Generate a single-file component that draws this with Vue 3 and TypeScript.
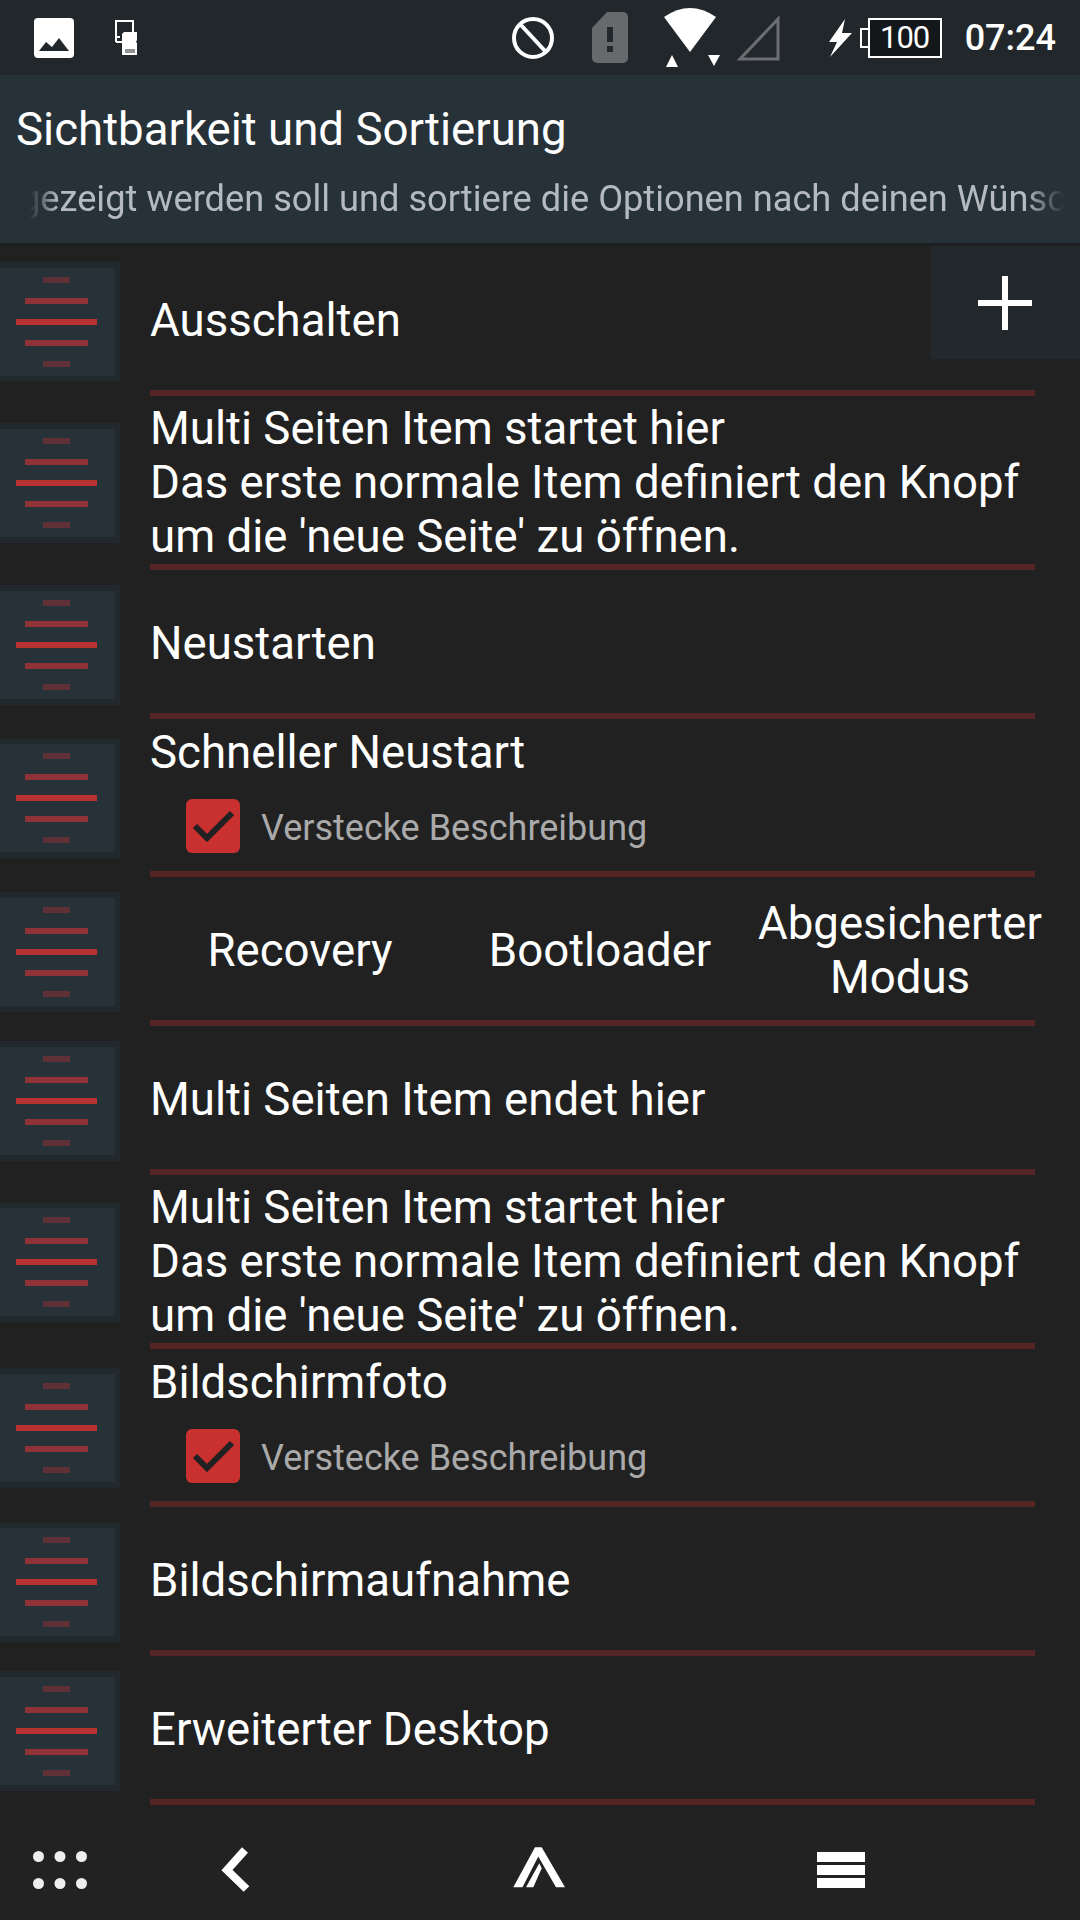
<template>
  <div class="screen">
    <div class="statusbar">
      <div class="statusbar__left">
        <svg width="40" height="40" viewBox="0 0 40 40">
          <rect x="0" y="0" width="40" height="40" rx="4" fill="#fff" />
          <path d="M5 33 L12 24 L18 29 L25 20 L35 33 Z" fill="#22272b" />
        </svg>
        <svg width="24" height="36" viewBox="0 0 24 36">
          <path d="M1 22V1h17v11" fill="none" stroke="#fff" stroke-width="2" />
          <path d="M1 22h6M1 17h4" fill="none" stroke="#fff" stroke-width="2" />
          <path d="M7 14l2-2h13v8l-1 2 1 1v12H7z" fill="#fff" />
          <path d="M11 29v4M13 29v4M15 29v4M17 29v4M19 29v4" stroke="#22272b" stroke-width="1" />
        </svg>
      </div>
      <div class="statusbar__right">
        <svg class="ic-block" width="44" height="44" viewBox="0 0 44 44">
          <circle cx="22" cy="22" r="19" fill="none" stroke="#fff" stroke-width="4" />
          <path d="M9 8 L35 36" stroke="#fff" stroke-width="4" />
        </svg>
        <svg class="ic-sim" width="36" height="51" viewBox="0 0 36 51">
          <path d="M15 0H31a5 5 0 0 1 5 5V46a5 5 0 0 1-5 5H5a5 5 0 0 1-5-5V16Z" fill="#666a6d" />
          <rect x="15" y="15" width="6" height="15" fill="#22272b" />
          <rect x="15" y="34" width="6" height="6" fill="#22272b" />
        </svg>
        <svg class="ic-wifi" width="58" height="60" viewBox="0 0 58 60">
          <path d="M1 9 Q27 -9 53 9 L27 44 Z" fill="#fff" />
          <path d="M3 59 L9 47 L15 59 Z" fill="#fff" />
          <path d="M45 47 H57 L51 58 Z" fill="#fff" />
        </svg>
        <svg class="ic-signal" width="45" height="46" viewBox="0 0 45 46">
          <path d="M43 4 V44 H5 Z" fill="none" stroke="#6b6f72" stroke-width="3" />
        </svg>
        <svg class="ic-bolt" width="23" height="38" viewBox="0 0 23 38">
          <path d="M16 0 L0 23 H8 L1 38 L23 14 H13 Z" fill="#fff" />
        </svg>
        <div class="battery"><span class="battery__cap"></span><span class="battery__body">100</span></div>
        <span class="clock">07:24</span>
      </div>
    </div>

    <header class="appbar">
      <h1 class="appbar__title">Sichtbarkeit und Sortierung</h1>
      <div class="appbar__sub"><span>gezeigt werden soll und sortiere die Optionen nach deinen Wünschen</span></div>
    </header>

    <main class="list">
      <div v-for="row in rows" :key="row.id" class="row" :style="{ height: row.height + 'px' }">
        <div class="handle">
          <div class="handle__inner">
            <i class="bar bar--far"></i>
            <i class="bar bar--near"></i>
            <i class="bar bar--mid"></i>
            <i class="bar bar--near"></i>
            <i class="bar bar--far"></i>
          </div>
        </div>
        <div class="row__body">
          <div v-if="row.columns" class="cols">
            <div v-for="col in row.columns" :key="col" class="cols__item">{{ col }}</div>
          </div>
          <div v-else class="row__text" :class="{ 'row__text--top': row.hideable }">
            <div v-for="line in row.lines" :key="line">{{ line }}</div>
            <label v-if="row.hideable" class="check">
              <svg width="54" height="54" viewBox="0 0 54 54">
                <rect width="54" height="54" rx="6" fill="#c93030" />
                <path d="M9 27 L21 39 L46 14" fill="none" stroke="#212121" stroke-width="6" />
              </svg>
              <span>Verstecke Beschreibung</span>
            </label>
          </div>
          <div class="row__rule"></div>
        </div>
      </div>

      <button class="add" type="button" aria-label="Hinzufügen"><span></span></button>
    </main>

    <nav class="navbar">
      <div class="navbar__item navbar__item--dots">
        <svg width="54" height="38" viewBox="0 0 54 38">
          <g fill="#eee">
            <circle cx="5.5" cy="5.5" r="5.5" /><circle cx="27" cy="5.5" r="5.5" /><circle cx="48.5" cy="5.5" r="5.5" />
            <circle cx="5.5" cy="32.5" r="5.5" /><circle cx="27" cy="32.5" r="5.5" /><circle cx="48.5" cy="32.5" r="5.5" />
          </g>
        </svg>
      </div>
      <div class="navbar__item navbar__item--back">
        <svg width="30" height="48" viewBox="0 0 30 48">
          <path d="M25 4 L7 24 L26.5 43" fill="none" stroke="#fff" stroke-width="8" />
        </svg>
      </div>
      <div class="navbar__item navbar__item--home">
        <svg width="52" height="48" viewBox="0 0 52 48">
          <path d="M22 1.3 H28.7 L52 41.3 H43 L25.3 10.5 L9.5 41.3 H0.3 Z" fill="#fff" />
          <path d="M13 41.3 H20.3 L28.7 22.3 L26.3 17.3 Z" fill="#fff" />
        </svg>
      </div>
      <div class="navbar__item navbar__item--menu">
        <div class="burger"><i></i><i></i><i></i></div>
      </div>
    </nav>
  </div>
</template>

<script setup lang="ts">
interface Row {
  id: number
  height: number
  lines?: string[]
  hideable?: boolean
  columns?: string[]
}

const multiStart = [
  'Multi Seiten Item startet hier',
  'Das erste normale Item definiert den Knopf',
  "um die 'neue Seite' zu öffnen.",
]

// the last row only peeks out above the nav bar
const rows: Row[] = [
  { id: 1, height: 149, lines: ['Ausschalten'] },
  { id: 2, height: 174, lines: multiStart },
  { id: 3, height: 149, lines: ['Neustarten'] },
  { id: 4, height: 158, lines: ['Schneller Neustart'], hideable: true },
  { id: 5, height: 149, columns: ['Recovery', 'Bootloader', 'Abgesicherter Modus'] },
  { id: 6, height: 149, lines: ['Multi Seiten Item endet hier'] },
  { id: 7, height: 174, lines: multiStart },
  { id: 8, height: 158, lines: ['Bildschirmfoto'], hideable: true },
  { id: 9, height: 149, lines: ['Bildschirmaufnahme'] },
  { id: 10, height: 149, lines: ['Erweiterter Desktop'] },
  { id: 11, height: 149, lines: [] },
]
</script>

<style>
html,
body {
  margin: 0;
  background: #212121;
}
</style>

<style scoped>
.screen {
  width: 1080px;
  height: 1920px;
  display: flex;
  flex-direction: column;
  overflow: hidden;
  background: #212121;
  color: #fff;
  font-family: Roboto, "Liberation Sans", sans-serif;
}

.statusbar {
  height: 75px;
  flex: none;
  display: flex;
  justify-content: space-between;
  align-items: center;
  background: #22272b;
}

.statusbar__left {
  display: flex;
  align-items: center;
  gap: 41px;
  padding-left: 34px;
}

.statusbar__right {
  display: flex;
  align-items: center;
  padding-right: 24px;
}

.ic-block { margin-right: 37px; }
.ic-sim { margin-right: 35px; }
.ic-wifi { margin-right: 14px; }
.ic-signal { margin-right: 49px; }
.ic-bolt { margin-right: 8px; }

.battery {
  display: flex;
  align-items: center;
  margin-right: 23px;
}

.battery__cap {
  width: 8px;
  height: 20px;
  border: 2px solid #fff;
  border-right: 0;
  box-sizing: border-box;
}

.battery__body {
  width: 74px;
  height: 40px;
  box-sizing: border-box;
  border: 2px solid #fff;
  background: #15181a;
  font-size: 31px;
  letter-spacing: -1px;
  line-height: 36px;
  text-align: center;
}

.clock {
  font-size: 36px;
  font-weight: 500;
}

.appbar {
  height: 168px;
  flex: none;
  background: #263238;
  overflow: hidden;
}

.appbar__title {
  margin: 0;
  padding: 28px 0 0 16px;
  font-size: 45.6px;
  font-weight: 400;
  line-height: 54px;
}

.appbar__sub {
  margin-top: 20px;
  padding-left: 20px;
  font-size: 36.2px;
  line-height: 44px;
  white-space: nowrap;
  overflow: hidden;
  color: #b4bac0;
  -webkit-mask-image: linear-gradient(to right, transparent 30px, #000 58px, #000 1025px, transparent 1064px);
  mask-image: linear-gradient(to right, transparent 30px, #000 58px, #000 1025px, transparent 1064px);
}

.list {
  position: relative;
  flex: 1;
  min-height: 0;
  overflow: hidden;
  padding-top: 4px;
  background: linear-gradient(#1d1f20, #212121 5px);
}

.row {
  display: flex;
  align-items: center;
}

.handle {
  flex: none;
  width: 120px;
  height: 120px;
  display: flex;
  align-items: center;
  background: #22292d;
}

.handle__inner {
  width: 115px;
  height: 108px;
  background: #263238;
  display: flex;
  flex-direction: column;
  align-items: center;
  justify-content: center;
  gap: 15px;
  box-sizing: border-box;
  padding-right: 2px;
}

.bar {
  display: block;
  height: 6px;
  background: #b83234;
}

.bar--mid { width: 81px; }
.bar--near { width: 63px; background: #8f3338; }
.bar--far { width: 27px; background: #5f3036; }

.row__body {
  flex: 1;
  align-self: stretch;
  display: flex;
  flex-direction: column;
  padding-left: 30px;
  min-width: 0;
}

.row__text,
.cols {
  flex: 1;
  min-height: 0;
  display: flex;
  flex-direction: column;
  justify-content: center;
  padding-top: 5px;
  font-size: 45.6px;
  line-height: 54px;
}

.row__text--top {
  justify-content: flex-start;
  padding-top: 7px;
}

.cols {
  flex-direction: row;
  justify-content: flex-start;
  align-items: center;
}

.cols__item {
  width: 300px;
  text-align: center;
}

.row__rule {
  flex: none;
  height: 6px;
  margin-right: 45px;
  background: #552424;
}

.check {
  display: flex;
  align-items: center;
  gap: 21px;
  margin: 19px 0 0 36px;
  color: #aaa;
  font-size: 36px;
}

.check span {
  padding-top: 3px;
  line-height: 48px;
}

.add {
  position: absolute;
  top: 3px;
  right: 0;
  width: 150px;
  height: 113px;
  padding: 0;
  border: 0;
  background: #22282b;
}

.add span {
  position: absolute;
  left: 48px;
  top: 30px;
  width: 54px;
  height: 54px;
  background:
    linear-gradient(#fff, #fff) 24px 0 / 6px 54px no-repeat,
    linear-gradient(#fff, #fff) 0 24px / 54px 6px no-repeat;
}

.navbar {
  position: relative;
  height: 100px;
  flex: none;
  display: flex;
  align-items: center;
  background: #222;
}

.navbar__item {
  display: flex;
  justify-content: center;
}

.navbar__item--dots { width: 120px; }
.navbar__item--back { width: 230px; }
.navbar__item--home { width: 378px; }
.navbar__item--menu { width: 226px; }

.burger {
  display: flex;
  flex-direction: column;
  gap: 3px;
}

.burger i {
  display: block;
  width: 48px;
  height: 10px;
  background: #fff;
}
</style>
